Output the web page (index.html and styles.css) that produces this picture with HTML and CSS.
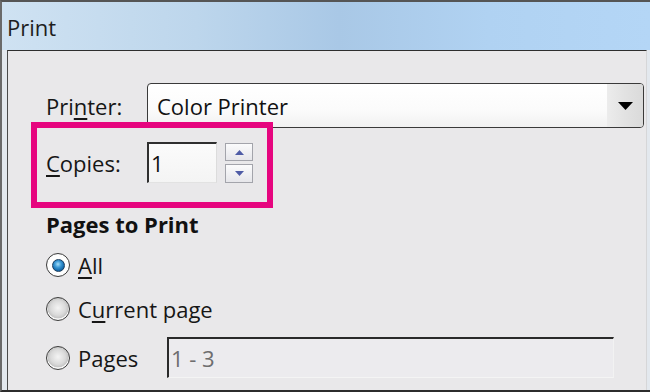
FILE: index.html
```html
<!DOCTYPE html>
<html>
<head>
<meta charset="utf-8">
<title>Print</title>
<link rel="stylesheet" href="styles.css">
</head>
<body>
<div class="window">
  <div class="titlebar">Print</div>
  <div class="client">
    <div class="row printer-row">
      <span class="label">Pri<u>n</u>ter:</span>
      <div class="combo">
        <span class="combo-text">Color Printer</span>
        <span class="combo-btn">
          <svg width="15" height="8" viewBox="0 0 15 8"><polygon points="0,0 15,0 7.5,8" fill="#000"/></svg>
        </span>
      </div>
    </div>
    <div class="row copies-row">
      <span class="label"><u>C</u>opies:</span>
      <div class="textbox">1</div>
      <div class="spinner">
        <div class="spin-btn">
          <svg width="9" height="5" viewBox="0 0 9 5"><polygon points="0,5 9,5 4.5,0" fill="#4f5ca6"/></svg>
        </div>
        <div class="spin-btn down">
          <svg width="9" height="5" viewBox="0 0 9 5"><polygon points="0,0 9,0 4.5,5" fill="#4f5ca6"/></svg>
        </div>
      </div>
    </div>
    <div class="heading">Pages to Print</div>
    <div class="radio-row all-row">
      <span class="radio checked"></span>
      <span class="radio-label"><u>A</u>ll</span>
    </div>
    <div class="radio-row current-row">
      <span class="radio"></span>
      <span class="radio-label">C<u>u</u>rrent page</span>
    </div>
    <div class="radio-row pages-row">
      <span class="radio"></span>
      <span class="radio-label pages-label">Pa<u>g</u>es</span>
      <div class="pages-input">1 - 3</div>
    </div>
  </div>
  <div class="highlight"></div>
</div>
</body>
</html>
```
FILE: styles.css
```css
html, body {
  margin: 0;
  padding: 0;
}
body {
  width: 650px;
  height: 392px;
  overflow: hidden;
  background: #e9e8ea;
  font-family: "Open Sans", "DejaVu Sans", sans-serif;
  font-size: 22px;
  line-height: 30px;
  color: #161616;
}
u {
  text-decoration: underline;
  text-decoration-thickness: 1.5px;
  text-underline-offset: 3px;
}
.window {
  position: relative;
  width: 650px;
  height: 392px;
  box-sizing: border-box;
  border-top: 2px solid #555;
  border-left: 2px solid #6a6a6a;
  border-bottom: 2px solid #2c2c2c;
  background: #e3e8ee;
  display: flex;
  flex-direction: column;
}
.titlebar {
  height: 48px;
  box-sizing: border-box;
  padding: 10px 0 0 5px;
  background: linear-gradient(to right, #cfe2f2 0%, #bdd6ec 30%, #a9c8e6 52%, #b0d2f2 75%, #b4d6f6 100%);
  color: #1e1e1e;
  flex: none;
}
.client {
  flex: 1;
  margin-left: 5px;
  margin-right: 3px;
  border-top: 1px solid #2e2e2e;
  border-left: 1px solid #4a4a4a;
  border-right: 1px solid #d6d6d8;
  background: #e9e8ea;
  padding-left: 38px;
  display: flex;
  flex-direction: column;
}
.row {
  display: flex;
  align-items: center;
}
.label {
  width: 101px;
  flex: none;
}
.printer-row {
  margin-top: 32px;
  height: 45px;
}
.combo {
  width: 497px;
  height: 45px;
  box-sizing: border-box;
  border: 1px solid #3a3a3a;
  border-radius: 4px;
  background: linear-gradient(#ffffff, #fbfbfb 60%, #f1f1f1);
  display: flex;
  align-items: center;
  overflow: hidden;
}
.combo-text {
  flex: 1;
  padding-left: 9px;
  color: #111;
}
.combo-btn {
  width: 36px;
  align-self: stretch;
  background: linear-gradient(to right, #ececec, #e2e2e2 50%, #dadada);
  display: flex;
  align-items: center;
  justify-content: center;
}
.copies-row {
  margin-top: 14px;
  height: 41px;
}
.textbox {
  width: 70px;
  height: 41px;
  box-sizing: border-box;
  border-top: 2px solid #2f2f2f;
  border-left: 2px solid #2f2f2f;
  border-right: 1px solid #dcdcdc;
  border-bottom: 1px solid #e2e2e2;
  background: linear-gradient(#fbfbfb, #f4f4f4);
  padding-left: 2px;
  display: flex;
  align-items: center;
  color: #111;
}
.spinner {
  margin-left: 8px;
  align-self: flex-start;
  margin-top: 1px;
  display: flex;
  flex-direction: column;
  gap: 3px;
}
.spin-btn {
  width: 28px;
  height: 18px;
  box-sizing: border-box;
  border: 1px solid #a3a4ab;
  background: linear-gradient(#fbfbfc, #e6e6ea);
  display: flex;
  align-items: center;
  justify-content: center;
}
.spin-btn.down {
  height: 19px;
}
.heading {
  margin-top: 26px;
  font-weight: 700;
  color: #111;
}
.radio-row {
  display: flex;
  align-items: center;
  height: 30px;
}
.all-row {
  margin-top: 11px;
}
.current-row {
  margin-top: 14px;
}
.pages-row {
  margin-top: 13px;
  height: 41px;
}
.radio {
  width: 24px;
  height: 24px;
  box-sizing: border-box;
  border-radius: 50%;
  border: 1px solid #3c3c3c;
  background: radial-gradient(circle at 50% 45%, #f4f4f4 0%, #dadada 45%, #c6c6c6 62%, #f6f6f6 66%, #ffffff 100%);
  flex: none;
  display: flex;
  align-items: center;
  justify-content: center;
}
.radio.checked {
  background: radial-gradient(circle, #ffffff 60%, #ececec 100%);
}
.radio.checked::after {
  content: "";
  width: 13px;
  height: 13px;
  box-sizing: border-box;
  border-radius: 50%;
  border: 1px solid #1b3d5e;
  background: radial-gradient(circle at 45% 38%, #a6def8 0%, #3d9ad6 35%, #166eb0 65%, #0c4277 100%);
}
.radio-label {
  margin-left: 8px;
}
.pages-label {
  width: 89px;
  flex: none;
}
.pages-input {
  width: 447px;
  height: 41px;
  box-sizing: border-box;
  border-top: 2px solid #2a2a2a;
  border-left: 2px solid #2a2a2a;
  border-right: 1px solid #f2f2f2;
  border-bottom: 1px solid #f4f4f4;
  background: #ecebee;
  padding-left: 2px;
  display: flex;
  align-items: center;
  color: #6e6e6e;
}
.highlight {
  position: absolute;
  left: 29px;
  top: 120px;
  width: 242px;
  height: 86px;
  box-sizing: border-box;
  border: 6px solid #e6057f;
}
```
